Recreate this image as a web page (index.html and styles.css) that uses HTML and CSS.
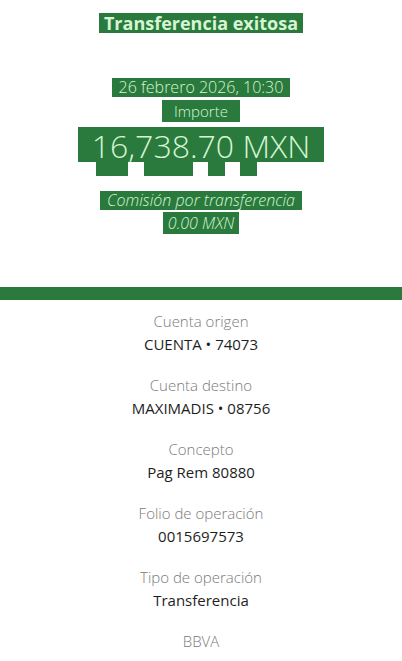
FILE: index.html
```html
<!DOCTYPE html>
<html lang="es">
<head>
<meta charset="utf-8">
<title>Transferencia exitosa</title>
<link rel="stylesheet" href="styles.css">
</head>
<body>
<main class="receipt">
  <section class="hero">
    <h1 class="hl title">Transferencia exitosa</h1>
    <p class="hl date">26 febrero 2026, 10:30</p>
    <p class="hl importe">Importe</p>
    <p class="hl amount">16,738.70 MXN</p>
    <div class="shards" aria-hidden="true"><i class="s1"></i><i class="s2"></i><i class="s3"></i><i class="s4"></i></div>
    <p class="hl fee-label">Comisión por transferencia</p>
    <p class="hl fee-value">0.00 MXN</p>
  </section>
  <div class="bar"></div>
  <section class="details">
    <div class="item"><span class="label">Cuenta origen</span><span class="value">CUENTA • 74073</span></div>
    <div class="item"><span class="label">Cuenta destino</span><span class="value">MAXIMADIS • 08756</span></div>
    <div class="item"><span class="label">Concepto</span><span class="value">Pag Rem 80880</span></div>
    <div class="item"><span class="label">Folio de operación</span><span class="value">0015697573</span></div>
    <div class="item"><span class="label">Tipo de operación</span><span class="value">Transferencia</span></div>
    <div class="item"><span class="label">BBVA</span></div>
  </section>
</main>
</body>
</html>
```
FILE: styles.css
```css
* { box-sizing: border-box; }
html, body { margin: 0; padding: 0; background: #ffffff; }
body { font-family: "Open Sans", "Liberation Sans", sans-serif; }

.receipt { width: 402px; }

.hero {
  display: flex;
  flex-direction: column;
  align-items: center;
}

.hl {
  margin: 0;
  background: #2a7a3e;
  color: #d6f5d2;
  padding: 0 7px;
  white-space: nowrap;
}

.title {
  margin-top: 13px;
  font-size: 18px;
  font-weight: 700;
  line-height: 20px;
  padding: 0 5px;
}

.date {
  margin-top: 45px;
  font-size: 16px;
  font-weight: 300;
  line-height: 19px;
}

.importe {
  margin-top: 3px;
  font-size: 15px;
  font-weight: 300;
  line-height: 22px;
  padding: 0 12px;
}

.amount {
  margin-top: 5px;
  font-size: 32px;
  font-weight: 300;
  line-height: 33px;
  padding: 2px 14px 0;
}

.shards {
  align-self: flex-start;
  margin-left: 96px;
  display: flex;
  gap: 16px;
  height: 14px;
}

.shards i { display: block; background: #2a7a3e; height: 100%; }
.shards .s1 { width: 32px; }
.shards .s2 { width: 49px; }
.shards .s3 { width: 17px; margin-left: -1px; }
.shards .s4 { width: 17px; margin-left: -1px; }

.fee-label {
  margin-top: 15px;
  font-size: 16px;
  font-weight: 300;
  font-style: italic;
  line-height: 19px;
}

.fee-value {
  margin-top: 2px;
  font-size: 16px;
  font-weight: 300;
  font-style: italic;
  line-height: 21px;
  padding: 1px 5px 0;
}

.bar {
  margin-top: 53px;
  height: 13px;
  background: #2a7a3e;
}

.details {
  display: flex;
  flex-direction: column;
  align-items: center;
  padding-top: 11px;
  gap: 21px;
}

.item {
  display: flex;
  flex-direction: column;
  align-items: center;
  gap: 3px;
}

.label {
  font-size: 15px;
  font-weight: 300;
  line-height: 20px;
  color: #7a7a7a;
}

.value {
  font-size: 15px;
  font-weight: 400;
  line-height: 20px;
  color: #1e1e1e;
}
```
